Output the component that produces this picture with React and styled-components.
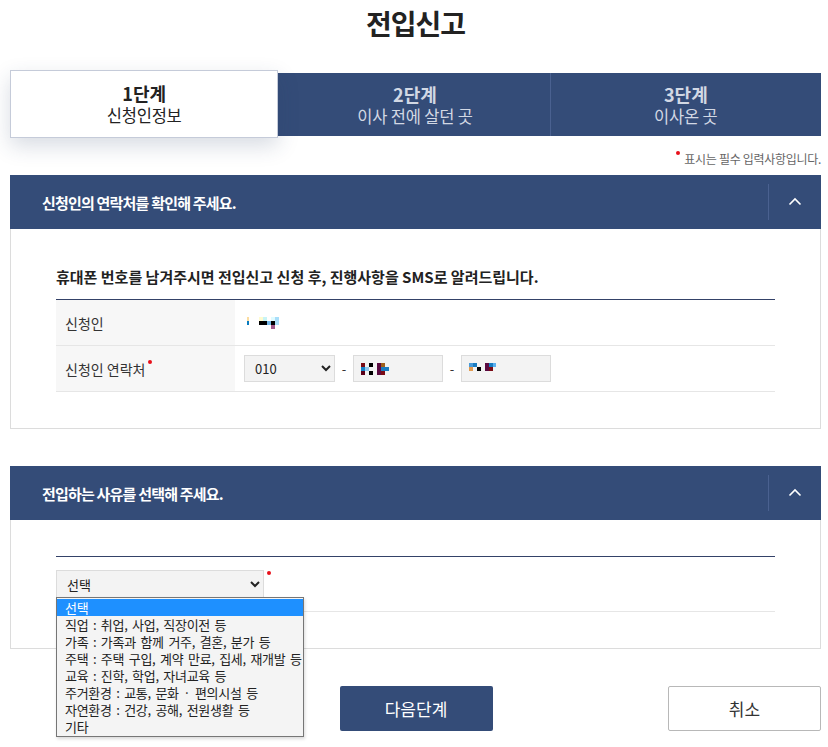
import styled, { createGlobalStyle } from 'styled-components'

const GlobalStyle = createGlobalStyle`
  body {
    margin: 0;
    background: #fff;
    font-family: "Noto Sans CJK KR", "Noto Sans", sans-serif;
    color: #222;
  }
`

const NAVY = '#344c78'

const reasons = [
  '선택',
  '직업 : 취업, 사업, 직장이전 등',
  '가족 : 가족과 함께 거주, 결혼, 분가 등',
  '주택 : 주택 구입, 계약 만료, 집세, 재개발 등',
  '교육 : 진학, 학업, 자녀교육 등',
  '주거환경 : 교통, 문화 · 편의시설 등',
  '자연환경 : 건강, 공해, 전원생활 등',
  '기타',
]

const steps = [
  { no: '1단계', name: '신청인정보' },
  { no: '2단계', name: '이사 전에 살던 곳' },
  { no: '3단계', name: '이사온 곳' },
]

// blurred personal data, drawn as mosaic blocks
const Mosaic = ({ blocks, w, h }) => (
  <svg width={w} height={h} viewBox={`0 0 ${w} ${h}`}>
    {blocks.map(([x, y, bw, bh, c], i) => (
      <rect key={i} x={x} y={y} width={bw} height={bh} fill={c} />
    ))}
  </svg>
)

const nameBlocks = [
  [0, 0, 2, 4, '#fbdca0'], [0, 4, 2, 4, '#0a7cc0'],
  [12, 0, 4, 4, '#fffbd0'], [16, 0, 4, 4, '#c8f4f6'],
  [12, 4, 8, 4, '#000'], [20, 4, 4, 4, '#76b8e8'],
  [24, 0, 4, 4, '#e0fbff'], [24, 4, 4, 4, '#000'], [24, 8, 4, 4, '#a05a8c'],
  [28, 0, 4, 8, '#a8defa'],
]
const phoneBlocks1 = [
  [0, 0, 4, 4, '#7a0a14'], [0, 4, 4, 4, '#1682c8'], [0, 8, 4, 4, '#5a0018'],
  [4, 4, 4, 4, '#90c8ee'], [8, 0, 4, 4, '#000'], [8, 8, 4, 4, '#000'],
  [16, 0, 4, 12, '#5a0a40'], [20, 0, 4, 4, '#a0601a'], [20, 4, 8, 4, '#1a7cc0'],
  [20, 8, 4, 4, '#7a0a14'],
]
const phoneBlocks2 = [
  [0, 0, 4, 4, '#4a9ad8'], [0, 4, 4, 4, '#e09a50'], [4, 0, 4, 4, '#1a7cc0'],
  [8, 4, 4, 4, '#000'], [16, 0, 4, 8, '#5a0a40'], [20, 0, 4, 4, '#1a7cc0'],
  [20, 4, 4, 4, '#7a0a14'], [24, 0, 3, 4, '#5ab0f0'],
]

const App = () => (
  <>
    <GlobalStyle />
    <Page>
      <Title>전입신고</Title>

      <Steps>
        {steps.map((s, i) => (
          <Step key={s.no} $active={i === 0} $last={i === steps.length - 1}>
            <StepNo>{s.no}</StepNo>
            <StepName>{s.name}</StepName>
          </Step>
        ))}
      </Steps>

      <RequiredNote>
        <Dot />표시는 필수 입력사항입니다.
      </RequiredNote>

      <Section>
        <SectionHead>
          <SectionTitle>신청인의 연락처를 확인해 주세요.</SectionTitle>
          <Toggle>
            <Chevron />
          </Toggle>
        </SectionHead>
        <SectionBody>
          <Desc>휴대폰 번호를 남겨주시면 전입신고 신청 후, 진행사항을 SMS로 알려드립니다.</Desc>
          <Table>
            <tbody>
              <tr>
                <Th>신청인</Th>
                <Td>
                  <Mosaic blocks={nameBlocks} w={32} h={12} />
                </Td>
              </tr>
              <tr>
                <Th>
                  신청인 연락처<Dot />
                </Th>
                <Td>
                  <PhoneRow>
                    <PhoneSelect defaultValue="010">
                      <option>010</option>
                      <option>011</option>
                      <option>016</option>
                    </PhoneSelect>
                    <Dash>-</Dash>
                    <PhoneBox>
                      <Mosaic blocks={phoneBlocks1} w={28} h={12} />
                    </PhoneBox>
                    <Dash>-</Dash>
                    <PhoneBox>
                      <Mosaic blocks={phoneBlocks2} w={28} h={12} />
                    </PhoneBox>
                  </PhoneRow>
                </Td>
              </tr>
            </tbody>
          </Table>
        </SectionBody>
      </Section>

      <Section $gap>
        <SectionHead>
          <SectionTitle>전입하는 사유를 선택해 주세요.</SectionTitle>
          <Toggle>
            <Chevron />
          </Toggle>
        </SectionHead>
        <SectionBody>
          <ReasonRow>
            <SelectWrap>
              <ReasonSelect defaultValue="선택">
                {reasons.map((r) => (
                  <option key={r}>{r}</option>
                ))}
              </ReasonSelect>
              <Dot />
              <OptionList>
                {reasons.map((r, i) => (
                  <OptionItem key={r} $selected={i === 0}>
                    {r}
                  </OptionItem>
                ))}
              </OptionList>
            </SelectWrap>
          </ReasonRow>
        </SectionBody>
      </Section>

      <Buttons>
        <NextButton>다음단계</NextButton>
        <CancelButton>취소</CancelButton>
      </Buttons>
    </Page>
  </>
)

const Chevron = () => (
  <svg width="14" height="9" viewBox="0 0 14 9">
    <path d="M1.5 7.5 L7 2 L12.5 7.5" fill="none" stroke="#fff" strokeWidth="1.6" />
  </svg>
)

const Page = styled.div`
  margin: 0 7px 0 10px;
  padding-bottom: 18px;
`

const Title = styled.h1`
  margin: 0;
  height: 48px;
  padding-top: 1px;
  text-align: center;
  font-size: 28px;
  font-weight: 700;
  line-height: 44px;
  color: #222;
  letter-spacing: -1px;
`

const Steps = styled.div`
  display: grid;
  grid-template-columns: repeat(3, 1fr);
  margin-top: 24px;
  height: 63px;
  background: ${NAVY};
`

const Step = styled.div`
  display: flex;
  flex-direction: column;
  align-items: center;
  justify-content: center;
  position: relative;
  z-index: ${(p) => (p.$active ? 1 : 0)};
  margin: ${(p) => (p.$active ? '-3px 2px -2px 0' : '0')};
  background: ${(p) => (p.$active ? '#fff' : 'transparent')};
  border: ${(p) => (p.$active ? '1px solid #c5cbd9' : 'none')};
  border-right: ${(p) => (!p.$active && !p.$last ? '1px solid #4a6190' : undefined)};
  box-shadow: ${(p) => (p.$active ? '0 8px 20px rgba(40, 60, 100, 0.18)' : 'none')};
  color: ${(p) => (p.$active ? '#222' : '#d2d8e4')};
`

const StepNo = styled.div`
  font-size: 18px;
  font-weight: 700;
  line-height: 22px;
`

const StepName = styled.div`
  font-size: 16.5px;
  line-height: 22px;
  letter-spacing: -0.2px;
`

const RequiredNote = styled.div`
  display: flex;
  justify-content: flex-end;
  margin-top: 14px;
  height: 25px;
  font-size: 12px;
  color: #666;
  letter-spacing: -0.3px;
  line-height: 18px;
`

const Dot = styled.span`
  display: inline-block;
  width: 4px;
  height: 4px;
  border-radius: 50%;
  background: #e8101a;
  margin: 1px 4px 0 3px;
  vertical-align: top;
`

const Section = styled.section`
  margin-top: ${(p) => (p.$gap ? '37px' : '0')};
`

const SectionHead = styled.div`
  display: flex;
  align-items: center;
  height: 54px;
  background: ${NAVY};
`

const SectionTitle = styled.h2`
  flex: 1;
  margin: 0 0 0 32px;
  font-size: 15px;
  font-weight: 700;
  color: #fff;
  letter-spacing: -0.8px;
`

const Toggle = styled.div`
  display: flex;
  align-items: center;
  justify-content: center;
  width: 53px;
  height: 36px;
  border-left: 1px solid #4a6190;
  padding-bottom: 2px;
  box-sizing: border-box;
`

const SectionBody = styled.div`
  border: 1px solid #dcdcdc;
  border-top: none;
  padding: 36px 45px 36px 45px;
`

const Desc = styled.p`
  margin: 0 0 10px;
  font-size: 15px;
  font-weight: 700;
  letter-spacing: 0;
  color: #222;
  line-height: 24px;
`

const Table = styled.table`
  width: 100%;
  border-collapse: collapse;
  border-top: 1px solid #344268;
`

const Th = styled.th`
  width: 170px;
  height: 45px;
  padding: 0 0 0 9px;
  background: #f7f7f7;
  border-bottom: 1px solid #e6e6e6;
  text-align: left;
  font-size: 14px;
  font-weight: 400;
  color: #333;
`

const Td = styled.td`
  padding: 0 0 0 12px;
  border-bottom: 1px solid #e6e6e6;
  vertical-align: middle;
  line-height: 0;
`

const PhoneRow = styled.div`
  display: flex;
  align-items: center;
  margin-left: -3px;
`

const PhoneSelect = styled.select`
  width: 91px;
  height: 27px;
  padding: 0 6px;
  border: 1px solid #dcdcdc;
  background: #f3f3f3;
  font-family: "Noto Sans CJK KR", sans-serif;
  font-size: 13px;
  color: #222;
  border-radius: 0;
`

const Dash = styled.span`
  width: 18px;
  text-align: center;
  font-size: 13px;
  line-height: 20px;
  color: #333;
`

const PhoneBox = styled.div`
  display: flex;
  align-items: center;
  width: 90px;
  height: 27px;
  padding-left: 7px;
  box-sizing: border-box;
  border: 1px solid #dcdcdc;
  background: #f3f3f3;
`

const ReasonRow = styled.div`
  border-top: 1px solid #344268;
  border-bottom: 1px solid #e6e6e6;
  padding: 13px 0 13px;
`

const SelectWrap = styled.div`
  position: relative;
  display: flex;
  align-items: flex-start;
`

const ReasonSelect = styled.select`
  width: 208px;
  height: 28px;
  padding: 0 6px;
  border: 1px solid #dcdcdc;
  background: #f3f3f3;
  font-family: "Noto Sans CJK KR", sans-serif;
  font-size: 13px;
  color: #222;
  border-radius: 0;
`

const OptionList = styled.ul`
  position: absolute;
  top: 27px;
  left: 0;
  z-index: 2;
  width: 248px;
  margin: 0;
  padding: 1px 0;
  list-style: none;
  background: #f4f4f4;
  border: 1px solid #767676;
  box-sizing: border-box;
  box-shadow: 1px 2px 3px rgba(0, 0, 0, 0.15);
`

const OptionItem = styled.li`
  height: 17px;
  padding-left: 8px;
  font-size: 13px;
  line-height: 17px;
  white-space: nowrap;
  letter-spacing: -0.3px;
  word-spacing: 2px;
  background: ${(p) => (p.$selected ? '#1e90ff' : 'transparent')};
  color: ${(p) => (p.$selected ? '#fff' : '#222')};
`

const Buttons = styled.div`
  display: grid;
  grid-template-columns: 1fr auto 1fr;
  align-items: center;
  margin-top: 37px;
  padding-left: 1px;
`

const NextButton = styled.button`
  grid-column: 2;
  width: 153px;
  height: 45px;
  border: none;
  border-radius: 2px;
  background: ${NAVY};
  color: #fff;
  font-family: "Noto Sans CJK KR", sans-serif;
  font-size: 17px;
`

const CancelButton = styled.button`
  justify-self: end;
  width: 153px;
  height: 45px;
  border: 1px solid #b8b8b8;
  border-radius: 2px;
  background: #fff;
  color: #333;
  font-family: "Noto Sans CJK KR", sans-serif;
  font-size: 17px;
`

export default App
